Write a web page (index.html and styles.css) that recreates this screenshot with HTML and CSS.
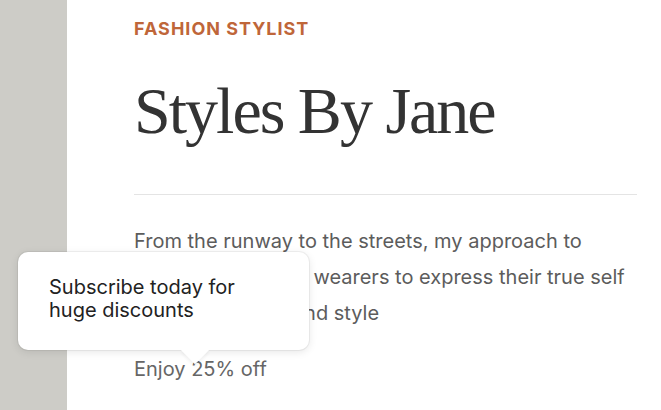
FILE: index.html
```html
<!DOCTYPE html>
<html lang="en">
<head>
  <meta charset="UTF-8" />
  <meta name="viewport" content="width=device-width, initial-scale=1.0"/>
  <title>Styles By Jane</title>
  <link rel="stylesheet" href="styles.css">
</head>
<body>

  <div class="page">
    <aside class="sidebar"></aside>

    <main class="content">
      <p class="eyebrow">Fashion Stylist</p>
      <h1 class="title">Styles By Jane</h1>
      <hr class="divider">
      <p class="intro">From the runway to the streets, my approach to fashion empowers wearers to express their true self through comfort and style</p>
      <p class="offer">Enjoy 25% off</p>
    </main>

    <div class="tooltip">
      Subscribe today for huge discounts
    </div>
  </div>

</body>
</html>
```

FILE: styles.css
```css
body {
  margin: 0;
  background: #fff;
  font-family: Inter, "Noto Sans", sans-serif;
}
.page {
  position: relative;
  display: flex;
  min-height: 410px;
}
.sidebar {
  width: 67px;
  flex-shrink: 0;
  background: #cdccc7;
}
.content {
  flex: 1;
  padding: 18px 24px 0 67px;
}
.eyebrow {
  margin: 0;
  font-size: 18px;
  line-height: 22px;
  font-weight: 700;
  letter-spacing: 1px;
  text-transform: uppercase;
  color: #bf6639;
}
.title {
  margin: 31px 0 0;
  font-family: "Liberation Serif", serif;
  font-weight: 400;
  font-size: 66px;
  line-height: 80px;
  letter-spacing: -2px;
  color: #333;
}
.divider {
  margin: 43px 0 0;
  border: none;
  border-top: 1px solid #e4e4e4;
}
.intro {
  margin: 28px 0 0;
  font-size: 20px;
  line-height: 36px;
  color: #5c5c5c;
}
.offer {
  margin: 20px 0 0;
  font-size: 20px;
  line-height: 36px;
  color: #666;
}
.tooltip {
  position: absolute;
  left: 18px;
  top: 252px;
  width: 291px;
  height: 98px;
  box-sizing: border-box;
  padding: 24px 31px;
  background: #fff;
  border-radius: 10px;
  box-shadow: 0 0 0 1px rgba(0, 0, 0, 0.05), 0 2px 8px rgba(0, 0, 0, 0.1);
  font-size: 20px;
  line-height: 23px;
  color: #222;
}
.tooltip::after {
  content: "";
  position: absolute;
  left: 167px;
  bottom: -10px;
  width: 20px;
  height: 20px;
  background: #fff;
  transform: rotate(45deg);
  box-shadow: 2px 2px 3px rgba(0, 0, 0, 0.05);
}
```
